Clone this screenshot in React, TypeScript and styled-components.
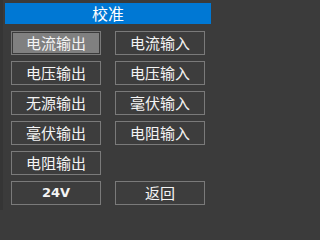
import React, { useState } from 'react'
import styled, { createGlobalStyle } from 'styled-components'

const GlobalStyle = createGlobalStyle`
  html, body {
    margin: 0;
    padding: 0;
    background: #3b3b3b;
  }
`

const items = [
  '电流输出',
  '电流输入',
  '电压输出',
  '电压输入',
  '无源输出',
  '毫伏输入',
  '毫伏输出',
  '电阻输入',
  '电阻输出',
]

const App = () => {
  const [active, setActive] = useState('电流输出')

  return (
    <>
      <GlobalStyle />
      <Panel>
        <Title>校准</Title>
        <Grid>
          {items.map((label) => (
            <Button
              key={label}
              $active={active === label}
              onClick={() => setActive(label)}
            >
              {label}
            </Button>
          ))}
          <Filler />
          <Button $bold>24V</Button>
          <Button>返回</Button>
        </Grid>
      </Panel>
    </>
  )
}

const Panel = styled.div`
  width: 215px;
  height: 210px;
  box-sizing: border-box;
  padding: 3px 4px 0 5px;
  background: #3b3b3b;
  border-left: 3px solid #353535;
  padding-left: 2px;
  font-family: 'Noto Sans CJK SC', 'Liberation Sans', sans-serif;
`

const Title = styled.div`
  height: 21px;
  background: #0078d4;
  color: #ffffff;
  font-size: 16px;
  line-height: 21px;
  text-align: center;
`

const Grid = styled.div`
  display: grid;
  grid-template-columns: 90px 90px;
  grid-auto-rows: 24px;
  column-gap: 14px;
  row-gap: 6px;
  margin: 7px 0 0 6px;
`

const Filler = styled.div``

const Button = styled.button<{ $active?: boolean; $bold?: boolean }>`
  box-sizing: border-box;
  width: 90px;
  height: 24px;
  padding: 0;
  border: 1px solid #7a7a7a;
  background: ${(p) => (p.$active ? '#808080' : '#3d3d3d')};
  box-shadow: ${(p) => (p.$active ? 'inset 0 0 0 1px #3b3b3b' : 'none')};
  color: #f4f4f4;
  font-family: ${(p) =>
    p.$bold
      ? "'DejaVu Sans', 'Liberation Sans', sans-serif"
      : "'Noto Sans CJK SC', 'Liberation Sans', sans-serif"};
  font-size: ${(p) => (p.$bold ? '13px' : '15px')};
  font-weight: ${(p) => (p.$bold ? 700 : 400)};
  line-height: 22px;
  text-align: center;
  cursor: pointer;

  &:focus {
    outline: none;
  }
`

export default App
